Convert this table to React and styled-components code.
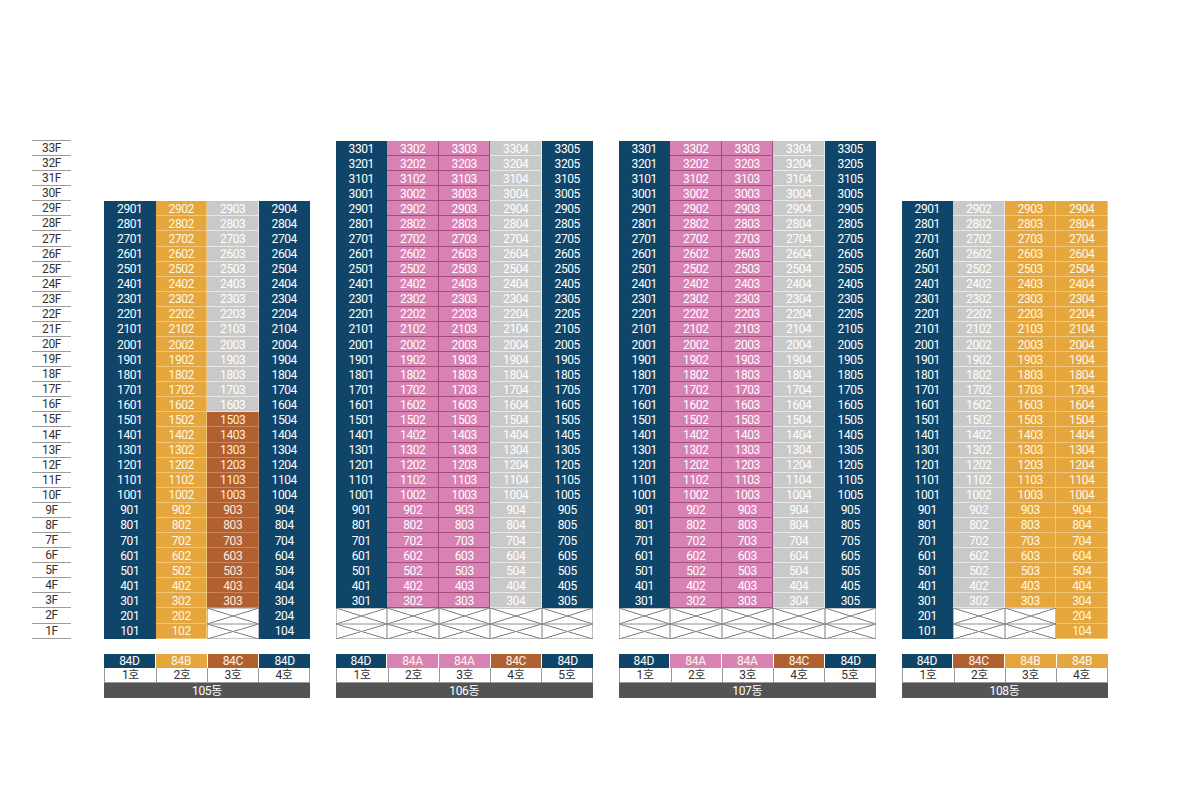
import React from 'react';
import styled, { createGlobalStyle, css } from 'styled-components';

const ROW = 15.08;
const COL = 51.5;
const TOTAL_FLOORS = 33;

const GlobalStyle = createGlobalStyle`
  html, body { margin: 0; padding: 0; background: #ffffff; }
  body { font-family: Roboto, "Noto Sans CJK KR", sans-serif; }
`;

const COLORS = {
  navy: '#0f4568',
  gold: '#e5a73d',
  gray: '#c9c9c9',
  pink: '#d881b3',
  brown: '#b1612f',
};

const TYPE_COLOR = { '84D': 'navy', '84A': 'pink', '84B': 'gold', '84C': 'brown' };

const Page = styled.div`
  display: flex;
  align-items: flex-start;
  width: 1200px;
  height: 800px;
  box-sizing: border-box;
  padding: 141px 0 0 32px;
`;

const FloorColumn = styled.div`
  display: flex;
  flex-direction: column;
  width: 39px;
  margin-right: 33px;
  border-top: 1px solid #9a9a9a;
  margin-top: -1px;
`;

const FloorLabel = styled.div`
  height: ${ROW}px;
  box-sizing: border-box;
  border-bottom: 1px solid #9a9a9a;
  display: flex;
  align-items: center;
  justify-content: center;
  font-size: 12px;
  letter-spacing: -0.4px;
  color: #333;
  line-height: 1;
`;

const Buildings = styled.div`
  display: flex;
  gap: 25.5px;
`;

const Building = styled.div`
  display: flex;
  flex-direction: column;
  width: ${(p) => p.$cols * COL}px;
`;

const UnitGrid = styled.div`
  display: grid;
  grid-template-columns: repeat(${(p) => p.$cols}, 1fr);
  grid-auto-rows: ${ROW}px;
  margin-top: ${(p) => (TOTAL_FLOORS - p.$floors) * ROW}px;
`;

const variantStyles = {
  navy: css`
    background: ${COLORS.navy};
    color: #ffffff;
  `,
  gold: css`
    background: ${COLORS.gold};
    color: #fff7e6;
    box-shadow: inset -1px -1px 0 rgba(255, 236, 200, 0.45);
  `,
  gray: css`
    background: ${COLORS.gray};
    color: #ffffff;
    box-shadow: inset -1px -1px 0 rgba(255, 255, 255, 0.55);
  `,
  pink: css`
    background: ${COLORS.pink};
    color: #ffffff;
    box-shadow: inset -1px -1px 0 #a44d7d;
  `,
  brown: css`
    background: ${COLORS.brown};
    color: #ffeadb;
    box-shadow: inset -1px -1px 0 rgba(255, 200, 170, 0.35);
  `,
  x: css`
    background-color: #ffffff;
    background-image:
      linear-gradient(to top right, transparent calc(50% - 0.8px), #8f8f8f calc(50% - 0.3px), #8f8f8f calc(50% + 0.3px), transparent calc(50% + 0.8px)),
      linear-gradient(to bottom right, transparent calc(50% - 0.8px), #8f8f8f calc(50% - 0.3px), #8f8f8f calc(50% + 0.3px), transparent calc(50% + 0.8px));
    box-shadow: inset 0 0 0 0.6px #8f8f8f;
  `,
};

const UnitCell = styled.div`
  display: flex;
  align-items: center;
  justify-content: center;
  font-size: 12px;
  letter-spacing: -0.4px;
  line-height: 1;
  ${(p) => variantStyles[p.$variant]}
`;

const TypeRow = styled.div`
  display: grid;
  grid-template-columns: repeat(${(p) => p.$cols}, 1fr);
  height: 14.5px;
  margin-top: 15px;
  gap: 1px;
  background: #ffffff;
`;

const TypeCell = styled.div`
  display: flex;
  align-items: center;
  justify-content: center;
  font-size: 12px;
  letter-spacing: -0.3px;
  line-height: 1;
  background: ${(p) => COLORS[p.$color]};
  color: ${(p) => (p.$color === 'navy' ? '#ffffff' : '#fff3e8')};
`;

const HoRow = styled.div`
  display: grid;
  grid-template-columns: repeat(${(p) => p.$cols}, 1fr);
  height: 15px;
  box-sizing: border-box;
  border: 1px solid #9a9a9a;
  border-top: none;
`;

const HoCell = styled.div`
  display: flex;
  align-items: center;
  justify-content: center;
  font-size: 12px;
  letter-spacing: -0.3px;
  line-height: 1;
  color: #2f2f2f;
  background: #ffffff;
  & + & {
    border-left: 1px solid #9a9a9a;
  }
`;

const NameBar = styled.div`
  height: 15px;
  background: #545454;
  color: #ffffff;
  display: flex;
  align-items: center;
  justify-content: center;
  font-size: 12px;
  letter-spacing: -0.3px;
  line-height: 1;
`;

const BUILDINGS = [
  {
    name: '105동',
    floors: 29,
    cols: [
      { type: '84D', cell: () => 'navy' },
      { type: '84B', cell: () => 'gold' },
      { type: '84C', cell: (f) => (f <= 2 ? 'x' : f <= 15 ? 'brown' : 'gray') },
      { type: '84D', cell: () => 'navy' },
    ],
  },
  {
    name: '106동',
    floors: 33,
    cols: [
      { type: '84D', cell: (f) => (f <= 2 ? 'x' : 'navy') },
      { type: '84A', cell: (f) => (f <= 2 ? 'x' : 'pink') },
      { type: '84A', cell: (f) => (f <= 2 ? 'x' : 'pink') },
      { type: '84C', cell: (f) => (f <= 2 ? 'x' : 'gray') },
      { type: '84D', cell: (f) => (f <= 2 ? 'x' : 'navy') },
    ],
  },
  {
    name: '107동',
    floors: 33,
    cols: [
      { type: '84D', cell: (f) => (f <= 2 ? 'x' : 'navy') },
      { type: '84A', cell: (f) => (f <= 2 ? 'x' : 'pink') },
      { type: '84A', cell: (f) => (f <= 2 ? 'x' : 'pink') },
      { type: '84C', cell: (f) => (f <= 2 ? 'x' : 'gray') },
      { type: '84D', cell: (f) => (f <= 2 ? 'x' : 'navy') },
    ],
  },
  {
    name: '108동',
    floors: 29,
    cols: [
      { type: '84D', cell: () => 'navy' },
      { type: '84C', cell: (f) => (f <= 2 ? 'x' : 'gray') },
      { type: '84B', cell: (f) => (f <= 2 ? 'x' : 'gold') },
      { type: '84B', cell: () => 'gold' },
    ],
  },
];

function BuildingBlock({ b }) {
  const n = b.cols.length;
  const cells = [];
  for (let f = b.floors; f >= 1; f--) {
    b.cols.forEach((c, i) => {
      const v = c.cell(f);
      cells.push(
        <UnitCell key={`${f}-${i}`} $variant={v}>
          {v === 'x' ? '' : f * 100 + i + 1}
        </UnitCell>
      );
    });
  }
  return (
    <Building $cols={n}>
      <UnitGrid $cols={n} $floors={b.floors}>
        {cells}
      </UnitGrid>
      <TypeRow $cols={n}>
        {b.cols.map((c, i) => (
          <TypeCell key={i} $color={TYPE_COLOR[c.type]}>
            {c.type}
          </TypeCell>
        ))}
      </TypeRow>
      <HoRow $cols={n}>
        {b.cols.map((c, i) => (
          <HoCell key={i}>{i + 1}호</HoCell>
        ))}
      </HoRow>
      <NameBar>{b.name}</NameBar>
    </Building>
  );
}

export default function App() {
  const floors = [];
  for (let f = TOTAL_FLOORS; f >= 1; f--) floors.push(f);
  return (
    <>
      <GlobalStyle />
      <Page>
        <FloorColumn>
          {floors.map((f) => (
            <FloorLabel key={f}>{f}F</FloorLabel>
          ))}
        </FloorColumn>
        <Buildings>
          {BUILDINGS.map((b) => (
            <BuildingBlock key={b.name} b={b} />
          ))}
        </Buildings>
      </Page>
    </>
  );
}
